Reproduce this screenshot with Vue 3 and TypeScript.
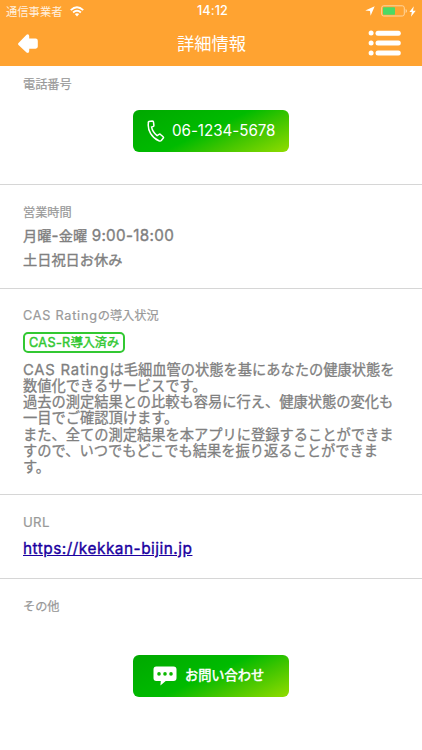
<script setup lang="ts">
interface Run { text: string; latin?: string }
const description: Run[][] = [
  [{ text: 'CAS Rating', latin: 'rating' }, { text: 'は毛細血管の状態を基にあなたの健康状態を' }],
  [{ text: '数値化できるサービスです。' }],
  [{ text: '過去の測定結果との比較も容易に行え、健康状態の変化も' }],
  [{ text: '一目でご確認頂けます。' }],
  [{ text: 'また、全ての測定結果を本アプリに登録することができま' }],
  [{ text: 'すので、いつでもどこでも結果を振り返ることができま' }],
  [{ text: 'す。' }],
]
</script>

<template>
  <div class="screen">
    <header class="header">
      <div class="status">
        <span class="carrier">通信事業者</span>
        <svg class="wifi" width="14" height="11" viewBox="0 0 14 11">
          <g fill="none" stroke="#fff" stroke-width="1.9">
            <path d="M.8 4.1Q7-1.7 13.2 4.1" />
            <path d="M3.1 6.5Q7 3 10.9 6.5" />
          </g>
          <path d="M4.8 8.1Q7 6.4 9.2 8.1L7 10.4Z" fill="#fff" />
        </svg>
        <span class="clock">14:12</span>
        <svg class="locate" width="10" height="10" viewBox="0 0 10 10"><path d="M9.7.3 5.6 9.7 5 5 .3 4.4Z" fill="#fff" /></svg>
        <svg class="battery" width="27" height="12" viewBox="0 0 27 12">
          <rect x=".7" y=".8" width="22.6" height="10.2" rx="2" fill="none" stroke="#ffd69f" />
          <rect x="2" y="2.2" width="12" height="7.5" rx=".6" fill="#4cd964" />
          <path d="M24.6 4v4q1.4-.5 1.4-2t-1.4-2" fill="#ffd69f" />
        </svg>
        <svg class="bolt" width="7" height="11" viewBox="0 0 7 11"><path d="M4.8.3.4 6h2.4L2 10.7 6.7 4.7H4Z" fill="#fff" /></svg>
      </div>
      <div class="nav">
        <svg class="back" width="22" height="22" viewBox="0 0 22 22">
          <path d="M1.5 11 9.5 2.7Q11.8 1.3 12.2 4V6.6H18.6Q20.8 6.6 20.8 8.7V14.6Q20.8 16.7 18.6 16.7H12.2V19.3Q11.8 22 9.5 20.6L1.5 13Q.4 12 1.5 11Z" fill="#fff" />
        </svg>
        <h1>詳細情報</h1>
        <svg class="menu" width="34" height="26" viewBox="0 0 34 26">
          <g fill="#fff">
            <circle cx="3.1" cy="3.1" r="2.5" /><circle cx="3.1" cy="13" r="2.5" /><circle cx="3.1" cy="23" r="2.5" />
            <rect x="7.5" y=".7" width="25.3" height="5" rx="2.5" />
            <rect x="7.5" y="10.5" width="25.3" height="5" rx="2.5" />
            <rect x="7.5" y="20.5" width="25.3" height="5" rx="2.5" />
          </g>
        </svg>
      </div>
    </header>

    <section class="phone">
      <h2>電話番号</h2>
      <button class="action">
        <svg class="handset" width="18" height="22" viewBox="0 0 18 22">
          <path d="M1.4 2.8Q1 1.8 2 1.4L5.3.9Q6.5.9 6.5 2.1L6.9 5.4Q6.9 6.3 5.9 6.6L4.6 7.1Q5.5 11.9 10.1 15.6L12.1 14.3Q12.9 13.8 13.5 14.5L16.1 16.7Q16.9 17.5 16.1 18.3L14.3 20.5Q13.5 21.4 11.9 20.8C5 17.8.3 10.5 1.4 2.8Z" fill="none" stroke="#fff" stroke-width="1.5" />
        </svg>
        <span class="number">06-1234-5678</span>
      </button>
    </section>

    <section class="hours">
      <h2>営業時間</h2>
      <p>月曜<span class="time">-</span>金曜<span class="time hours-range">9:00-18:00</span></p>
      <p>土日祝日お休み</p>
    </section>

    <section class="cas">
      <h2><span class="cas-latin">CAS Rating</span>の導入状況</h2>
      <div class="badge"><span class="badge-latin">CAS-R</span>導入済み</div>
      <div class="description">
        <div v-for="(line, i) in description" :key="i"><span v-for="(run, j) in line" :key="j" :class="run.latin">{{ run.text }}</span></div>
      </div>
    </section>

    <section class="url">
      <h2><span class="url-label">URL</span></h2>
      <a href="https://kekkan-bijin.jp">https://kekkan-bijin.jp</a>
    </section>

    <section class="other">
      <h2>その他</h2>
      <button class="action">
        <svg class="bubble" width="24" height="20" viewBox="0 0 24 20">
          <path d="M3.2.5H20.5Q23.5.5 23.5 3.5V12Q23.5 15 20.5 15H12.7L7.4 19.4 7.8 15H3.2Q.5 15 .5 12V3.5Q.5.5 3.2.5Z" fill="#fff" />
          <g fill="#0bb800"><circle cx="6" cy="7.9" r="1.8" /><circle cx="12" cy="7.9" r="1.8" /><circle cx="18" cy="7.9" r="1.8" /></g>
        </svg>
        <span class="contact">お問い合わせ</span>
      </button>
    </section>
  </div>
</template>

<style>
body { margin: 0; background: #fff; }
</style>

<style scoped>
.screen { width: 422px; height: 750px; overflow: hidden; background: #fff; color: #808080; font-family: "Noto Sans CJK JP", sans-serif; }
.header { height: 65.5px; background: #ffa331; color: #fff; box-sizing: border-box; }
.status { height: 22px; display: flex; align-items: center; padding-left: 6px; font-size: 11.3px; }
.carrier { width: 57px; line-height: 22px; color: #fff0df; white-space: nowrap; }
.wifi { margin-left: 7px; }
.clock { margin-left: 113px; width: 34px; font: 500 12.7px/22px Inter, sans-serif; letter-spacing: .1px; }
.locate { margin-left: 134px; }
.battery { margin-left: 6px; flex: none; }
.bolt { margin-left: 1px; flex: none; }
.nav { height: 42px; display: grid; grid-template-columns: 160px 1fr 34px; align-items: center; padding: 0 20px 0 17px; }
h1 { margin: 0; font-size: 17.3px; line-height: 41px; height: 42px; font-weight: 400; white-space: nowrap; }
section { box-sizing: border-box; padding: 9.5px 23px 0; border-bottom: 1px solid #d6d6d6; }
h2 { margin: 0; height: 18px; font-size: 12.2px; line-height: 18px; font-weight: 400; color: #999; -webkit-text-stroke: .2px #999; }
p { margin: 0; font-size: 14.2px; white-space: nowrap; }
.phone { height: 119.5px; }
.hours { height: 104px; padding-top: 18px; }
.hours p { height: 24px; line-height: 24px; -webkit-text-stroke: .35px #808080; }
.hours h2 { margin-bottom: 2px; }
.cas { height: 206px; padding-top: 17px; }
.url { height: 84px; padding-top: 18px; }
.other { border: 0; padding-top: 18px; }
.time { font-family: Inter, sans-serif; font-size: 15.2px; letter-spacing: .35px; }
.hours-range { margin-left: 4.5px; }
.cas-latin, .url-label { font-family: Inter, sans-serif; font-size: 12.7px; letter-spacing: .75px; }
.url-label { letter-spacing: .3px; font-size: 13.2px; }
.badge { box-sizing: border-box; width: 102px; height: 21px; margin-top: 7.5px; border: 2px solid #32c832; border-radius: 5px; color: #32c832; font-size: 12.1px; line-height: 16px; text-align: center; white-space: nowrap; -webkit-text-stroke: .45px #32c832; }
.badge-latin { font-family: Inter, sans-serif; font-size: 12.7px; letter-spacing: .35px; }
.description { margin-top: 8px; font-size: 14.25px; line-height: 16.3px; white-space: nowrap; -webkit-text-stroke: .3px #808080; }
.description > div { height: 16.3px; }
.rating { font-family: Inter, sans-serif; font-size: 14.8px; letter-spacing: .8px; }
a { display: inline-block; margin-top: 6px; color: #1a00a0; font: 400 15.4px/24px Inter, sans-serif; letter-spacing: .5px; text-decoration: underline; -webkit-text-stroke: .35px #1a00a0; }
.action { display: flex; align-items: center; width: 156px; height: 42.5px; margin: 17px auto 0; padding: 0; border: 0; border-radius: 6px; color: #fff; background: linear-gradient(155deg, #00a800 0%, #00bb00 48%, #3fc500 69%, #91dc00 100%); white-space: nowrap; }
.phone .action { margin-top: 16.5px; }
.other .action { margin-top: 39.5px; }
.handset { margin-left: 14px; }
.number { margin-left: 7px; font: 400 15.2px/43px Inter, sans-serif; letter-spacing: -.05px; }
.bubble { margin-left: 20px; }
.contact { margin-left: 8px; font: 400 13.2px/40px "Noto Sans CJK JP", sans-serif; height: 42px; -webkit-text-stroke: .5px #fff; }
</style>
